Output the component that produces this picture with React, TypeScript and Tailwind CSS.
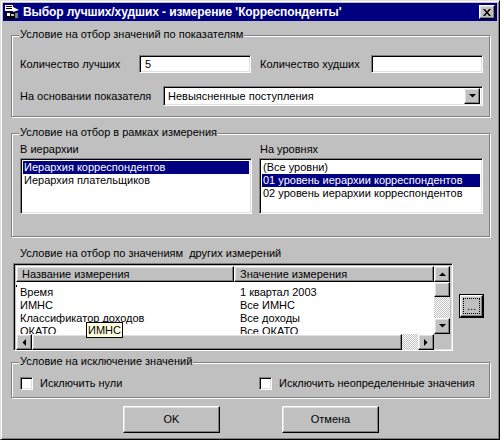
import type { ReactNode } from 'react';

const raised =
  'border border-t-white border-l-white border-r-black border-b-black shadow-[inset_-1px_-1px_#808080,inset_1px_1px_#dfdfdf] bg-[#c0c0c0]';
const sunken =
  'border border-t-[#808080] border-l-[#808080] border-r-white border-b-white shadow-[inset_1px_1px_#000,inset_-1px_-1px_#dfdfdf]';
const etched = 'border border-[#808080] shadow-[inset_1px_1px_#fff,1px_1px_#fff]';
const checker =
  'bg-[repeating-conic-gradient(#c0c0c0_0%_25%,#fff_0%_50%)] bg-[length:2px_2px]';

function Group({ label, className, children }: { label: string; className: string; children?: ReactNode }) {
  return (
    <div className={`relative ${etched} ${className}`}>
      <span className="absolute left-[7px] top-[-8px] bg-[#c0c0c0] px-[1px] leading-[13px] whitespace-nowrap">
        {label}
      </span>
      {children}
    </div>
  );
}

function Arrow({ dir }: { dir: 'up' | 'down' | 'left' | 'right' }) {
  const pts = {
    up: '0,4 7,4 3.5,0.5',
    down: '0,0 7,0 3.5,3.5',
    left: '4,0 4,7 0.5,3.5',
    right: '0,0 0,7 3.5,3.5',
  }[dir];
  const vertical = dir === 'up' || dir === 'down';
  return (
    <svg width={vertical ? 7 : 4} height={vertical ? 4 : 7} viewBox={vertical ? '0 0 7 4' : '0 0 4 7'}>
      <polygon points={pts} fill="#000" />
    </svg>
  );
}

function ArrowButton({ dir }: { dir: 'up' | 'down' | 'left' | 'right' }) {
  return (
    <div className={`${raised} w-[16px] h-[16px] flex items-center justify-center shrink-0`}>
      <Arrow dir={dir} />
    </div>
  );
}

function Checkbox({ label }: { label: string }) {
  return (
    <div className="flex items-center h-[13px]">
      <div className={`${sunken} w-[13px] h-[13px] bg-white shrink-0`} />
      <span className="ml-[7px] leading-[13px] whitespace-nowrap">{label}</span>
    </div>
  );
}

const rows = [
  ['Время', '1 квартал 2003'],
  ['ИМНС', 'Все ИМНС'],
  ['Классификатор доходов', 'Все доходы'],
  ['ОКАТО', 'Все ОКАТО'],
];

export default function App() {
  return (
    <div className="w-[500px] h-[440px] bg-[#c0c0c0] border border-t-[#dfdfdf] border-l-[#dfdfdf] border-r-black border-b-black shadow-[inset_1px_1px_#fff,inset_-1px_-1px_#808080] p-[2px] flex flex-col font-['Liberation_Sans',Arial,sans-serif] text-[11px] text-black select-none">
      {/* Title bar */}
      <div className="h-[18px] bg-[#000080] flex items-center pl-[1px] pr-[2px] shrink-0">
        <svg width="16" height="16" viewBox="0 0 16 16" className="shrink-0">
          <rect x="1" y="1" width="8" height="6" fill="#fff" />
          <rect x="2" y="2" width="6" height="1" fill="#000" />
          <rect x="2" y="4" width="6" height="1" fill="#000" />
          <polygon points="9,3 15,6 9,8" fill="#fff" />
          <rect x="1" y="8" width="10" height="7" fill="#000" />
          <rect x="3" y="9" width="3" height="3" fill="#fff" />
          <rect x="7" y="10" width="3" height="2" fill="#c0c0c0" />
          <rect x="11" y="9" width="3" height="5" fill="#808080" />
        </svg>
        <span className="ml-[3px] text-white font-bold text-[12px] leading-[18px] whitespace-nowrap tracking-[-0.1px]">
          Выбор лучших/худших - измерение 'Корреспонденты'
        </span>
        <div className={`${raised} ml-auto w-[16px] h-[14px] flex items-center justify-center`}>
          <svg width="8" height="7" viewBox="0 0 8 7">
            <path d="M0 0h2l2 2.5L6 0h2L5 3.5 8 7H6L4 4.5 2 7H0l3-3.5z" fill="#000" />
          </svg>
        </div>
      </div>

      {/* Body */}
      <div className="flex flex-col pl-[8px]">
        <Group label="Условие на отбор значений по показателям" className="mt-[14px] w-[479px] h-[82px]">
          <div className="pl-[8px] pt-[19px]">
            <div className="flex items-center h-[18px]">
              <span className="w-[119px] whitespace-nowrap">Количество лучших</span>
              <div className={`${sunken} w-[112px] h-[18px] bg-white flex items-center pl-[5px]`}>5</div>
              <span className="ml-[9px] w-[111px] whitespace-nowrap">Количество худших</span>
              <div className={`${sunken} w-[112px] h-[18px] bg-white`} />
            </div>
            <div className="flex items-center h-[20px] mt-[13px]">
              <span className="w-[143px] whitespace-nowrap">На основании показателя</span>
              <div className={`${sunken} w-[320px] h-[20px] bg-white flex items-center p-[2px]`}>
                <span className="pl-[2px] flex-1 whitespace-nowrap">Невыясненные поступления</span>
                <ArrowButton dir="down" />
              </div>
            </div>
          </div>
        </Group>

        <Group label="Условие на отбор в рамках измерения" className="mt-[16px] w-[479px] h-[104px]">
          <div className="pl-[8px] pt-[9px] flex">
            <div className="w-[232px] flex flex-col">
              <span className="leading-[13px] h-[13px]">В иерархии</span>
              <div className={`${sunken} mt-[2px] h-[56px] bg-white p-[2px] flex flex-col`}>
                <div className="h-[13px] leading-[13px] pl-[1px] bg-[#000080] text-white">Иерархия корреспондентов</div>
                <div className="h-[13px] leading-[13px] pl-[1px]">Иерархия плательщиков</div>
              </div>
            </div>
            <div className="w-[224px] ml-[7px] flex flex-col">
              <span className="leading-[13px] h-[13px] pl-[1px]">На уровнях</span>
              <div className={`${sunken} mt-[2px] h-[56px] bg-white p-[2px] flex flex-col`}>
                <div className="h-[13px] leading-[13px] pl-[1px]">(Все уровни)</div>
                <div className="h-[13px] leading-[13px] pl-[1px] bg-[#000080] text-white whitespace-nowrap">
                  01 уровень иерархии корреспондентов
                </div>
                <div className="h-[13px] leading-[13px] pl-[1px] whitespace-nowrap">02 уровень иерархии корреспондентов</div>
              </div>
            </div>
          </div>
        </Group>

        <span className="mt-[10px] pl-[9px] h-[13px] leading-[13px] whitespace-pre">
          Условие на отбор по значениям  других измерений
        </span>

        <div className="mt-[3px] flex items-start">
          {/* Grid */}
          <div className={`${sunken} relative ml-[2px] w-[440px] h-[88px] p-[2px] flex flex-col bg-[#c0c0c0]`}>
            <div className="flex h-[68px]">
              <div className="w-[420px] flex flex-col bg-white">
                <div className="flex h-[16px] shrink-0">
                  <div className={`${raised} w-[218px] pl-[5px] leading-[14px] whitespace-nowrap`}>Название измерения</div>
                  <div className={`${raised} flex-1 pl-[5px] leading-[14px] whitespace-nowrap`}>Значение измерения</div>
                </div>
                <div className="relative flex-1 overflow-hidden pt-[4px]">
                  <span className="absolute left-0 top-[3px] w-[1px] h-[2px] bg-black" />
                  {rows.map(([name, value]) => (
                    <div key={name} className="flex h-[13px] leading-[13px] whitespace-nowrap">
                      <span className="w-[218px] pl-[4px]">{name}</span>
                      <span className="pl-[6px]">{value}</span>
                    </div>
                  ))}
                </div>
              </div>
              <div className="w-[16px] flex flex-col">
                <ArrowButton dir="up" />
                <div className={`${raised} h-[15px]`} />
                <div className={`${checker} flex-1`} />
                <ArrowButton dir="down" />
              </div>
            </div>
            <div className="flex h-[16px]">
              <ArrowButton dir="left" />
              <div className={`${raised} flex-1`} />
              <div className={`${checker} w-[16px]`} />
              <ArrowButton dir="right" />
              <div className="w-[16px]" />
            </div>
            <div className="absolute left-[72px] top-[58px] h-[16px] px-[1px] bg-[#ffffe1] border border-black leading-[14px]">
              ИМНС
            </div>
          </div>

          <div className="ml-[6px] mt-[31px] w-[25px] h-[24px] border border-black">
            <div className={`${raised} w-full h-full p-[2px]`}>
              <div className="w-full h-full border border-dotted border-black flex items-end justify-center leading-[10px] pb-[2px]">
                ...
              </div>
            </div>
          </div>
        </div>

        <Group label="Условие на исключение значений" className="mt-[11px] w-[479px] h-[36px]">
          <div className="pl-[8px] pt-[14px] flex">
            <div className="w-[239px]">
              <Checkbox label="Исключить нули" />
            </div>
            <Checkbox label="Исключить неопределенные значения" />
          </div>
        </Group>

        <div className="mt-[8px] flex">
          <div className={`${raised} ml-[112px] w-[97px] h-[27px] flex items-center justify-center`}>OK</div>
          <div className={`${raised} ml-[62px] w-[97px] h-[27px] flex items-center justify-center`}>Отмена</div>
        </div>
      </div>
    </div>
  );
}
